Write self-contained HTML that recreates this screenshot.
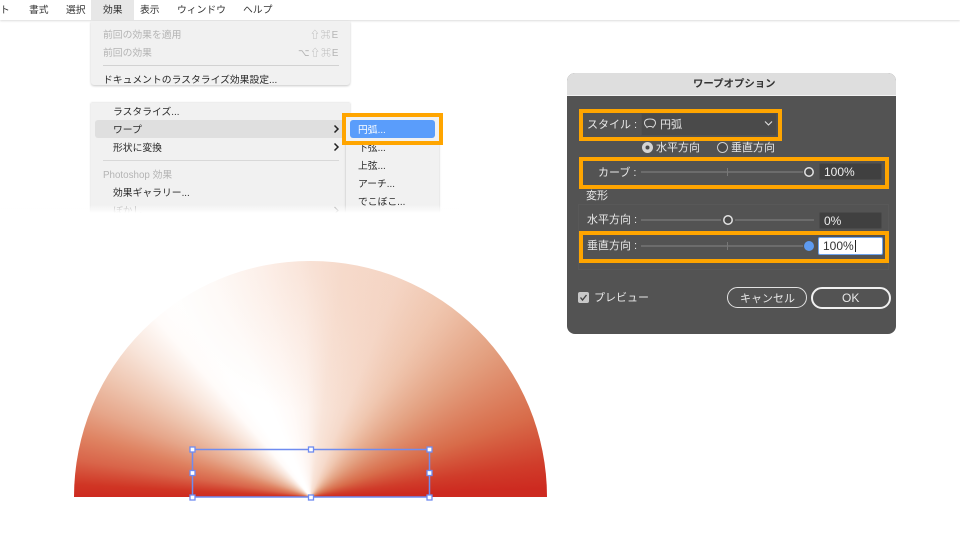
<!DOCTYPE html>
<html lang="ja">
<head>
<meta charset="utf-8">
<style>
html,body{margin:0;padding:0;background:#fff;overflow:hidden;}
body{width:960px;height:540px;position:relative;font-family:"Liberation Sans","Noto Sans CJK JP",sans-serif;font-size:10px;color:#2a2a2a;}
#w{position:absolute;left:0;top:0;width:960px;height:540px;overflow:hidden;filter:blur(.3px);}
.a{position:absolute;}
.t{position:absolute;white-space:nowrap;line-height:14px;}
.dis{color:#b4b4b4;}
.m{font-size:9.8px;}
.d{color:#e8e8e8;font-size:11px;}
.o{position:absolute;box-sizing:border-box;border:4px solid #ffa500;}
.track{position:absolute;height:2px;background:#6c6c6c;}
.tick{position:absolute;width:1px;height:8px;background:#777;}
.field{position:absolute;box-sizing:border-box;background:#404040;border:1px solid #4a4a4a;border-radius:2px;color:#eee;font-size:12px;line-height:16px;padding-left:4px;}
</style>
</head>
<body>
<div id="w">
<!-- menu bar -->
<div class="a" style="left:0;top:0;width:960px;height:20px;background:#fff;box-shadow:0 1px 2px rgba(0,0,0,.14);"></div>
<div class="a" style="left:91px;top:0;width:43px;height:20px;background:#e7e7e7;"></div>
<div class="t m" style="left:0;top:4px;color:#333;">ト</div>
<div class="t m" style="left:29px;top:4px;color:#333;">書式</div>
<div class="t m" style="left:66px;top:4px;color:#333;">選択</div>
<div class="t m" style="left:103px;top:4px;color:#333;">効果</div>
<div class="t m" style="left:140px;top:4px;color:#333;">表示</div>
<div class="t m" style="left:177px;top:4px;color:#333;">ウィンドウ</div>
<div class="t m" style="left:243px;top:4px;color:#333;">ヘルプ</div>

<!-- menu 1 -->
<div class="a" style="left:91px;top:21px;width:259px;height:64px;background:#f1f1f1;border-radius:0 0 3px 3px;box-shadow:0 1px 2px rgba(0,0,0,.22);"></div>
<div class="t m dis" style="left:103px;top:29px;">前回の効果を適用</div>
<div class="t m dis" style="left:310px;top:29px;letter-spacing:1px;">⇧⌘E</div>
<div class="t m dis" style="left:103px;top:47px;">前回の効果</div>
<div class="t m dis" style="left:298px;top:47px;letter-spacing:1px;">⌥⇧⌘E</div>
<div class="a" style="left:103px;top:65px;width:236px;height:1px;background:#d2d2d2;"></div>
<div class="t m" style="left:103px;top:74px;">ドキュメントのラスタライズ効果設定...</div>

<!-- menu 2 -->
<div class="a" style="left:91px;top:103px;width:259px;height:110px;background:#f1f1f1;box-shadow:0 0 2px rgba(0,0,0,.22);overflow:hidden;">
  <div class="a" style="left:4px;top:17px;width:251px;height:18px;background:#dfdfdf;border-radius:3px;"></div>
</div>
<div class="t m" style="left:113px;top:106px;">ラスタライズ...</div>
<div class="t m" style="left:113px;top:124px;">ワープ</div>
<div class="t m" style="left:113px;top:142px;">形状に変換</div>
<div class="a" style="left:103px;top:160px;width:236px;height:1px;background:#d8d8d8;"></div>
<div class="t m dis" style="left:103px;top:169px;">Photoshop 効果</div>
<div class="t m" style="left:113px;top:187px;">効果ギャラリー...</div>
<div class="t m dis" style="left:113px;top:205px;">ぼかし</div>
<svg class="a" style="left:332px;top:124px;" width="8" height="30" viewBox="0 0 8 30"><path d="M2.5 1.5 L6 5 L2.5 8.5 M2.5 19.5 L6 23 L2.5 26.5" fill="none" stroke="#222" stroke-width="1.5"/></svg>
<svg class="a" style="left:332px;top:206px;" width="8" height="10" viewBox="0 0 8 10"><path d="M2.5 1 L6 4.5 L2.5 8" fill="none" stroke="#aaa" stroke-width="1.2"/></svg>

<!-- submenu -->
<div class="a" style="left:346px;top:115px;width:93px;height:98px;background:#f1f1f1;box-shadow:0 0 2px rgba(0,0,0,.25);"></div>
<div class="t m" style="left:358px;top:142px;">下弦...</div>
<div class="t m" style="left:358px;top:160px;">上弦...</div>
<div class="t m" style="left:358px;top:178px;">アーチ...</div>
<div class="t m" style="left:358px;top:196px;">でこぼこ...</div>
<div class="a" style="left:0;top:205px;width:460px;height:8px;background:linear-gradient(rgba(255,255,255,0),#fff);"></div>
<div class="a" style="left:0;top:213px;width:460px;height:8px;background:#fff;"></div>
<div class="a" style="left:346px;top:116px;width:93px;height:27px;background:#f1f1f1;"></div>
<div class="a" style="left:350px;top:120px;width:85px;height:18px;background:#5a9dfb;border-radius:3px;"></div>
<div class="t m" style="left:358px;top:124px;color:#fff;">円弧...</div>
<div class="o" style="left:342px;top:113px;width:101px;height:32px;"></div>

<!-- artwork -->
<div class="a" style="left:74px;top:261px;width:473px;height:236px;border-radius:236.5px 236.5px 0 0;background-blend-mode:multiply;background-image:radial-gradient(circle 150px at 50% 0,#fbefe8 0,#fff 100%),conic-gradient(from 270deg at 50% 100%,#cd2a20 0deg,#d03524 3deg,#d9654a 9deg,#df8362 15deg,#e6a68a 22deg,#eec4ae 30deg,#f8e4d9 40deg,#fffbf9 49deg,#fff 56deg,#fff 66deg,#fffaf8 78deg,#fdf3ee 88deg,#f9e5da 98deg,#f6dacb 112deg,#f0c7b0 124deg,#e3a080 141deg,#d86c4a 160deg,#d03c2a 172deg,#cd2a20 178deg,#cd2a20 180deg,#cd2a20 360deg);"></div>
<svg class="a" style="left:185px;top:443px;" width="252" height="60" viewBox="0 0 252 60">
  <rect x="7.5" y="6.5" width="237" height="47.5" fill="none" stroke="#6f8cf0" stroke-width="1.5"/>
  <g fill="#fff" stroke="#6f8cf0" stroke-width="1.3">
    <rect x="5" y="4" width="5" height="5"/><rect x="123.5" y="4" width="5" height="5"/><rect x="242" y="4" width="5" height="5"/>
    <rect x="5" y="27.5" width="5" height="5"/><rect x="242" y="27.5" width="5" height="5"/>
    <rect x="5" y="52" width="5" height="5"/><rect x="123.5" y="52" width="5" height="5"/><rect x="242" y="52" width="5" height="5"/>
  </g>
</svg>

<!-- dialog -->
<div class="a" style="left:567px;top:73px;width:329px;height:261px;background:#535353;border-radius:8px;overflow:hidden;">
  <div class="a" style="left:0;top:0;width:329px;height:22px;background:#dedede;border-bottom:1px solid #f2f2f2;"></div>
</div>
<div class="t" style="left:693px;top:78px;font-size:10.4px;font-weight:bold;color:#333;">ワープオプション</div>

<div class="t d" style="left:587px;top:118px;">スタイル :</div>
<div class="a" style="left:641px;top:113px;width:136px;height:23px;box-sizing:border-box;background:#4a4a4a;border:1px solid #505050;"></div>
<svg class="a" style="left:643px;top:118px;" width="14" height="12" viewBox="0 0 14 12"><path d="M1.5 5 C1.5 2 4 1 7 1 C10 1 12.5 2 12.5 5 C12.5 7 11 8 10 9.5 C9 8 5 8 4 9.5 C3 8 1.5 7 1.5 5 Z" fill="none" stroke="#d8d8d8" stroke-width="1"/></svg>
<div class="t d" style="left:660px;top:118px;">円弧</div>
<svg class="a" style="left:764px;top:120px;" width="9" height="7" viewBox="0 0 9 7"><path d="M1 1.5 L4.5 5 L8 1.5" fill="none" stroke="#e0e0e0" stroke-width="1.1"/></svg>

<svg class="a" style="left:641px;top:141px;" width="13" height="13" viewBox="0 0 13 13"><circle cx="6.5" cy="6.5" r="5.5" fill="#d4d4d4"/><circle cx="6.5" cy="6.5" r="2" fill="#4a4a4a"/></svg>
<div class="t d" style="left:656px;top:141px;">水平方向</div>
<svg class="a" style="left:716px;top:141px;" width="13" height="13" viewBox="0 0 13 13"><circle cx="6.5" cy="6.5" r="5" fill="#484848" stroke="#cfcfcf" stroke-width="1"/></svg>
<div class="t d" style="left:731px;top:141px;">垂直方向</div>

<!-- curve -->
<div class="t d" style="left:598px;top:166px;">カーブ :</div>
<div class="track" style="left:641px;top:171px;width:162px;"></div>
<div class="tick" style="left:727px;top:168px;"></div>
<svg class="a" style="left:803px;top:166px;" width="12" height="12" viewBox="0 0 12 12"><circle cx="6" cy="6" r="4.2" fill="#4a4a4a" stroke="#e4e4e4" stroke-width="1.5"/></svg>
<div class="field" style="left:819px;top:163px;width:63px;height:17px;">100%</div>

<div class="t d" style="left:586px;top:189px;">変形</div>
<div class="a" style="left:578px;top:204px;width:311px;height:66px;box-sizing:border-box;border:1px solid #585858;"></div>

<!-- horizontal -->
<div class="t d" style="left:587px;top:213px;">水平方向 :</div>
<div class="track" style="left:641px;top:219px;width:80px;"></div>
<div class="track" style="left:735px;top:219px;width:79px;"></div>
<svg class="a" style="left:722px;top:214px;" width="12" height="12" viewBox="0 0 12 12"><circle cx="6" cy="6" r="4.2" fill="#4a4a4a" stroke="#e4e4e4" stroke-width="1.5"/></svg>
<div class="field" style="left:819px;top:212px;width:63px;height:17px;">0%</div>

<!-- vertical -->
<div class="t d" style="left:587px;top:239px;">垂直方向 :</div>
<div class="track" style="left:641px;top:245px;width:162px;"></div>
<div class="tick" style="left:727px;top:242px;"></div>
<div class="a" style="left:804px;top:241px;width:10px;height:10px;border-radius:50%;background:#5e9bf0;"></div>
<div class="field" style="left:818px;top:237px;width:65px;height:18px;background:#fff;border:1px solid #6ea3ec;color:#333;">100%</div>
<div class="a" style="left:855px;top:240px;width:1px;height:12px;background:#222;"></div>

<!-- orange -->
<div class="o" style="left:579px;top:109px;width:203px;height:32px;"></div>
<div class="o" style="left:579px;top:157px;width:310px;height:32px;"></div>
<div class="o" style="left:579px;top:231px;width:310px;height:32px;"></div>

<!-- preview -->
<div class="a" style="left:578px;top:292px;width:11px;height:11px;background:#c8c8c8;border-radius:2px;"></div>
<svg class="a" style="left:578px;top:292px;" width="11" height="11" viewBox="0 0 11 11"><path d="M2.5 5.5 L4.5 8 L8.5 3" fill="none" stroke="#444" stroke-width="1.4"/></svg>
<div class="t d" style="left:594px;top:291px;">プレビュー</div>

<!-- buttons -->
<div class="a" style="left:727px;top:287px;width:80px;height:21px;box-sizing:border-box;border:1px solid #e2e2e2;border-radius:11px;"></div>
<div class="t d" style="left:740px;top:292px;">キャンセル</div>
<div class="a" style="left:811px;top:287px;width:80px;height:22px;box-sizing:border-box;border:2px solid #f0f0f0;border-radius:11px;"></div>
<div class="t d" style="left:842px;top:291px;font-size:12px;">OK</div>
</div>
</body>
</html>
